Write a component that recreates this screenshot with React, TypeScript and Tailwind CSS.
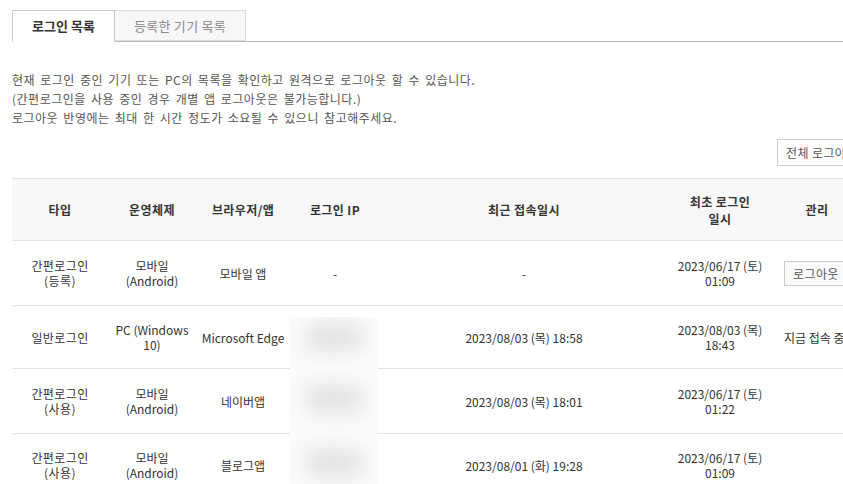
import React from "react";

const font = { fontFamily: '"Noto Sans CJK KR", "Noto Sans", sans-serif' };

type Row = { type: React.ReactNode; os: React.ReactNode; br: string; ip: string; last: string; first: React.ReactNode; manage: React.ReactNode };

const rows: Row[] = [
  {
    type: (<>간편로그인<br />(등록)</>),
    os: (<>모바일<br />(Android)</>),
    br: "모바일 앱",
    ip: "-",
    last: "-",
    first: (<>2023/06/17 (토)<br />01:09</>),
    manage: (
      <button className="h-[25px] w-[90px] border border-[#cccccc] bg-[#fafafa] text-left pl-[8px] text-[12px] text-[#555] whitespace-nowrap tracking-[0.4px]">로그아웃</button>
    ),
  },
  {
    type: "일반로그인",
    os: (<>PC (Windows<br />10)</>),
    br: "Microsoft Edge",
    ip: "",
    last: "2023/08/03 (목) 18:58",
    first: (<>2023/08/03 (목)<br />18:43</>),
    manage: <span className="whitespace-nowrap">지금 접속 중</span>,
  },
  {
    type: (<>간편로그인<br />(사용)</>),
    os: (<>모바일<br />(Android)</>),
    br: "네이버앱",
    ip: "",
    last: "2023/08/03 (목) 18:01",
    first: (<>2023/06/17 (토)<br />01:22</>),
    manage: "",
  },
  {
    type: (<>간편로그인<br />(사용)</>),
    os: (<>모바일<br />(Android)</>),
    br: "블로그앱",
    ip: "",
    last: "2023/08/01 (화) 19:28",
    first: (<>2023/06/17 (토)<br />01:09</>),
    manage: "",
  },
];

export default function App() {
  return (
    <div className="w-[843px] h-[484px] overflow-hidden bg-white text-[12px] text-[#333]" style={font}>
      <div className="pt-[10px] pl-[12px] w-[1000px]">
        {/* tabs */}
        <div className="flex h-[32px] border-b border-[#bbbbbb] w-[831px]">
          <div className="w-[103px] h-[32px] border border-[#c8c8c8] border-b-white bg-white flex items-center justify-center font-bold text-[13px] text-[#333] -mb-px">
            로그인 목록
          </div>
          <div className="w-[131px] h-[31px] border border-l-0 border-[#dddddd] bg-[#f7f7f7] flex items-center justify-center text-[13px] text-[#8a8a8a] tracking-[0.3px]">
            등록한 기기 목록
          </div>
        </div>

        {/* description */}
        <div className="mt-[28px] text-[12px] leading-[19px] text-[#555] tracking-[0.5px] [word-spacing:2px]">
          <p>현재 로그인 중인 기기 또는 PC의 목록을 확인하고 원격으로 로그아웃 할 수 있습니다.</p>
          <p>(간편로그인을 사용 중인 경우 개별 앱 로그아웃은 불가능합니다.)</p>
          <p>로그아웃 반영에는 최대 한 시간 정도가 소요될 수 있으니 참고해주세요.</p>
        </div>

        <div className="mt-[12px] flex w-[850px]">
          <div className="ml-[765px] h-[27px] border border-[#cccccc] bg-white flex items-center pl-[8px] text-[12px] text-[#555] whitespace-nowrap w-[100px] tracking-[0.4px]">
            전체 로그아웃
          </div>
        </div>

        {/* table */}
        <div className="relative mt-[12px] w-[850px]">
          <table className="table-fixed border-collapse w-[850px] text-center">
            <colgroup>
              <col className="w-[96px]" />
              <col className="w-[88px]" />
              <col className="w-[94px]" />
              <col className="w-[90px]" />
              <col className="w-[288px]" />
              <col className="w-[104px]" />
              <col className="w-[90px]" />
            </colgroup>
            <thead>
              <tr className="h-[62px] bg-[#f8f8f8] border-t border-b border-[#e3e3e3] font-bold text-[12px] leading-[17px] text-[#333] tracking-[0.4px]">
                <th>타입</th>
                <th>운영체제</th>
                <th>브라우저/앱</th>
                <th>로그인 IP</th>
                <th>최근 접속일시</th>
                <th>최초 로그인<br />일시</th>
                <th>관리</th>
              </tr>
            </thead>
            <tbody>
              {rows.map((r, i) => (
                <tr key={i} className={`${i % 2 === 0 ? "h-[65px]" : "h-[63px]"} border-b border-[#e3e3e3] leading-[15px] text-[#333]`}>
                  <td className="px-[4px] tracking-[0.4px]">{r.type}</td>
                  <td className="px-[4px]">{r.os}</td>
                  <td className="px-[2px] whitespace-nowrap">{r.br}</td>
                  <td>{r.ip}</td>
                  <td>{r.last}</td>
                  <td>{r.first}</td>
                  <td className="text-left pl-[12px]">{r.manage}</td>
                </tr>
              ))}
            </tbody>
          </table>
          {/* blurred IP overlay */}
          <div className="absolute left-[278px] top-[139px] w-[88px] h-[260px] bg-[#fbfbfb] overflow-hidden flex flex-col items-center">
            <div className="mt-[6px] w-[60px] h-[28px] rounded-full bg-[#e2e2e2] blur-[10px]" />
            <div className="mt-[34px] w-[60px] h-[28px] rounded-full bg-[#e2e2e2] blur-[10px]" />
            <div className="mt-[36px] w-[60px] h-[28px] rounded-full bg-[#e2e2e2] blur-[10px]" />
          </div>
        </div>
      </div>
    </div>
  );
}
